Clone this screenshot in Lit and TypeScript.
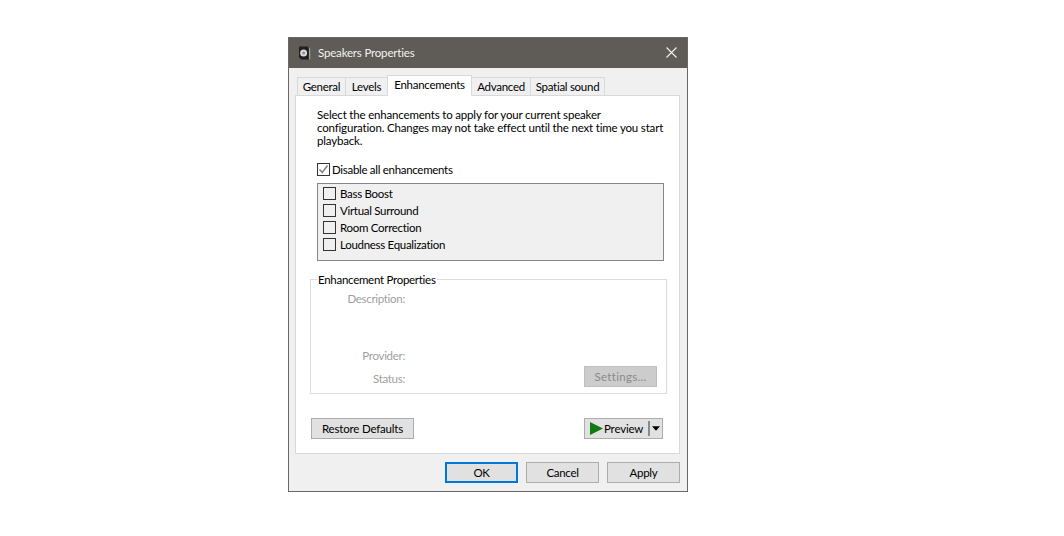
import { LitElement, html, css } from "lit";
import { customElement } from "lit/decorators.js";

@customElement("app-root")
export class AppRoot extends LitElement {
  static styles = css`
    :host { display: block; width: 1064px; height: 536px; background: #fff; padding: 37px 0 0 288px; box-sizing: border-box;
      font-family: Lato, "Open Sans", sans-serif; font-size: 11.5px; letter-spacing: -0.18px; color: #000; }
    .win { width: 400px; height: 455px; box-sizing: border-box; border: 1px solid #6b6864; background: #f0f0f0; display: flex; flex-direction: column; }
    .title { height: 30px; flex: none; background: #5f5b56; color: #fff; display: flex; align-items: center; padding: 0 10px 1px 9px; box-sizing: border-box; font-size: 11.5px; }
    .title svg.ic { width: 14px; height: 16px; margin-right: 6px; flex: none; }
    .title span { flex: 1; color: #f2f2f2; }
    .tabs { display: flex; height: 21px; margin: 6px 0 0 8px; align-items: flex-end; position: relative; z-index: 1; letter-spacing: -0.28px; }
    .tab { box-sizing: border-box; height: 18px; background: #f0f0f0; border: 1px solid #d9d9d9; border-bottom: none; margin-left: -1px; display: flex; align-items: center; justify-content: center; }
    .tab.first { margin-left: 0; }
    .tab.sel { height: 21px; background: #fff; margin-bottom: -1px; padding: 0 0 3px; border-color: #d9d9d9; z-index: 2; }
    .panel { box-sizing: border-box; margin-left: 6px; width: 385px; height: 359px; background: #fff; border: 1px solid #d9d9d9; padding: 12px 14px 0 21px; display: flex; flex-direction: column; }
    .para { line-height: 13px; white-space: nowrap; }
    .cbrow { display: flex; align-items: center; height: 17px; letter-spacing: -0.3px; }
    .cb { box-sizing: border-box; width: 13px; height: 13px; border: 1px solid #333; background: #fff; flex: none; margin-right: 4px; display: block; }
    .cb svg { display: block; width: 11px; height: 11px; }
    .master { margin-top: 14px; }
    .list { box-sizing: border-box; margin-top: 5px; width: 347px; height: 78px; background: #f0f0f0; border: 1px solid #828790; padding: 1px 5px; }
    .list .cb { background: #f0f0f0; }
    .group { margin: 18px 0 0 -7px; width: 357px; height: 115px; box-sizing: border-box; border: 1px solid #dcdcdc; position: relative; display: flex; flex-direction: column; }
    .legend { position: absolute; left: 6px; top: -8px; background: #fff; padding: 0 1px; line-height: 15px; color: #000; letter-spacing: -0.28px; }
    .prop { color: #a0a0a0; width: 94px; text-align: right; height: 15px; line-height: 15px; letter-spacing: -0.3px; }
    .p1 { margin-top: 11px; }
    .p2 { margin-top: 42px; }
    .bottomrow { display: flex; align-items: flex-start; margin-top: 8px; height: 21px; }
    .fill { flex: 1; }
    .btn { box-sizing: border-box; height: 21px; border: 1px solid #adadad; background: #e1e1e1; display: flex; align-items: center; justify-content: center; flex: none; }
    .settings { width: 73px; margin: -5px 9px 0 0; height: 21px; background: #cccccc; border-color: #bfbfbf; color: #8a8a8a; letter-spacing: 0.3px; }
    .actions { display: flex; align-items: flex-start; margin: 24px 0 0 -6px; width: 352px; }
    .restore { width: 103px; }
    .preview { width: 79px; justify-content: flex-start; padding-left: 5px; }
    .preview .play { width: 13px; height: 13px; margin-right: 1px; flex: none; }
    .sep { width: 2px; height: 15px; background: #8a8a8a; margin-left: 5px; flex: none; }
    .preview .caret { width: 8px; height: 5px; margin-left: 2px; flex: none; }
    .foot { display: flex; gap: 8px; justify-content: flex-end; margin: 8px 7px 0 0; letter-spacing: -0.3px; }
    .foot .btn { width: 73px; }
    .ok { border: 2px solid #0078d7 !important; }
  `;

  render() {
    const items = ["Bass Boost", "Virtual Surround", "Room Correction", "Loudness Equalization"];
    return html`
      <div class="win">
        <div class="title">
          <svg class="ic" viewBox="0 0 14 16">
            <path d="M1 1.5h9l2.5 2v11H3.5L1 12.5z" fill="#20201f"/>
            <path d="M10 1.5l2.5 2v11h-1.6V3z" fill="#a09e9a"/>
            <circle cx="5.6" cy="8" r="3.5" fill="#d8dadb"/>
            <circle cx="5.6" cy="8" r="1.5" fill="#8d9092"/>
          </svg>
          <span>Speakers Properties</span>
          <svg width="11" height="11" viewBox="0 0 11 11"><path d="M.5.5l10 10M10.5.5l-10 10" stroke="#f0f0f0" stroke-width="1.1" fill="none"/></svg>
        </div>
        <div class="tabs">
          <div class="tab first" style="width:49px">General</div>
          <div class="tab" style="width:43px">Levels</div>
          <div class="tab sel" style="width:85px">Enhancements</div>
          <div class="tab" style="width:60px">Advanced</div>
          <div class="tab" style="width:75px">Spatial sound</div>
        </div>
        <div class="panel">
          <div class="para">Select the enhancements to apply for your current speaker<br>configuration. Changes may not take effect until the next time you start<br>playback.</div>
          <div class="cbrow master">
            <span class="cb" style="margin-right:2px"><svg viewBox="0 0 11 11"><path d="M1.5 5.5l2.8 3 5.2-7" stroke="#7a7a7a" stroke-width="1.4" fill="none"/></svg></span>
            Disable all enhancements
          </div>
          <div class="list">
            ${items.map((t) => html`<div class="cbrow"><span class="cb"></span>${t}</div>`)}
          </div>
          <div class="group">
            <div class="legend">Enhancement Properties</div>
            <div class="prop p1">Description:</div>
            <div class="prop p2">Provider:</div>
            <div class="bottomrow">
              <div class="prop">Status:</div>
              <div class="fill"></div>
              <div class="btn settings">Settings...</div>
            </div>
          </div>
          <div class="actions">
            <div class="btn restore">Restore Defaults</div>
            <div class="fill"></div>
            <div class="btn preview">
              <svg class="play" viewBox="0 0 13 13"><path d="M0 0l13 6.5L0 13z" fill="#117a11"/></svg>
              Preview
              <span class="sep"></span>
              <svg class="caret" viewBox="0 0 9 5"><path d="M0 0h9L4.5 5z" fill="#000"/></svg>
            </div>
          </div>
        </div>
        <div class="foot">
          <div class="btn ok">OK</div>
          <div class="btn">Cancel</div>
          <div class="btn">Apply</div>
        </div>
      </div>
    `;
  }
}
